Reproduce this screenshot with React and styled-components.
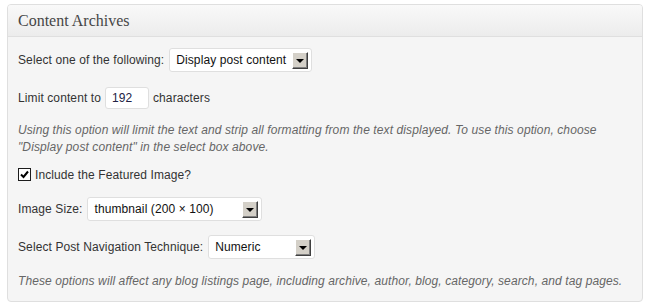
import React from "react";
import styled, { createGlobalStyle } from "styled-components";

const Global = createGlobalStyle`
  html, body {
    margin: 0;
    padding: 0;
    background: #ffffff;
  }
  body {
    font-family: "Liberation Sans", Arial, sans-serif;
    font-size: 12px;
    letter-spacing: 0.1px;
    color: #333333;
  }
`;

const Page = styled.div`
  padding: 4px 3px 5px 7px;
`;

const Panel = styled.div`
  width: 634px;
  border: 1px solid #dfdfdf;
  border-radius: 4px;
  background: #f5f5f5;
  overflow: hidden;
`;

const Header = styled.div`
  height: 31px;
  border-bottom: 1px solid #dfdfdf;
  background: linear-gradient(to bottom, #f9f9f9, #ececec);
  display: flex;
  align-items: center;
  padding-left: 10px;
`;

const Title = styled.h3`
  margin: 0;
  font-family: "Liberation Serif", "DejaVu Serif", serif;
  font-weight: normal;
  font-size: 16px;
  letter-spacing: 0;
  color: #464646;
`;

const Body = styled.div`
  padding: 11px 10px 11px 10px;
  display: flex;
  flex-direction: column;
`;

const Row = styled.div`
  display: flex;
  align-items: center;
  height: ${(p) => p.$h || 24}px;
  margin-top: ${(p) => p.$mt || 0}px;
  gap: ${(p) => p.$gap || 5}px;
  white-space: nowrap;
`;

const Note = styled.p`
  margin: ${(p) => p.$mt || 0}px 0 0;
  font-style: italic;
  color: #666666;
  line-height: 17px;
`;

const SelectBox = styled.div`
  width: ${(p) => p.$w}px;
  height: 24px;
  box-sizing: border-box;
  border: 1px solid #dfdfdf;
  border-radius: 3px;
  background: #ffffff;
  display: flex;
  align-items: center;
  justify-content: space-between;
  padding: 0 3px 0 6px;
  color: #111111;
`;

const DropButton = styled.span`
  width: 16px;
  height: 17px;
  box-sizing: border-box;
  background: #d4d0c8;
  border-top: 1px solid #ffffff;
  border-left: 1px solid #ffffff;
  border-right: 1px solid #404040;
  border-bottom: 1px solid #404040;
  box-shadow: inset -1px -1px 0 #808080;
  display: flex;
  align-items: center;
  justify-content: center;
`;

const Arrow = styled.span`
  width: 0;
  height: 0;
  border-left: 4px solid transparent;
  border-right: 4px solid transparent;
  border-top: 4px solid #000000;
  margin: 1px 1px 0 0;
`;

const TextInput = styled.div`
  width: 44px;
  height: 22px;
  box-sizing: border-box;
  border: 1px solid #dfdfdf;
  border-radius: 3px;
  background: #ffffff;
  display: flex;
  align-items: center;
  padding-left: 6px;
  color: #222244;
`;

const Check = styled.span`
  width: 13px;
  height: 13px;
  box-sizing: border-box;
  border: 1px solid #1c1c1c;
  background: #ffffff;
  display: flex;
  align-items: center;
  justify-content: center;
`;

const Select = ({ value, width }) => (
  <SelectBox $w={width}>
    <span>{value}</span>
    <DropButton>
      <Arrow />
    </DropButton>
  </SelectBox>
);

export default function App() {
  return (
    <Page>
      <Global />
      <Panel>
        <Header>
          <Title>Content Archives</Title>
        </Header>
        <Body>
          <Row>
            <span>Select one of the following:</span>
            <Select value="Display post content" width={143} />
          </Row>
          <Row $h={22} $mt={15} $gap={4}>
            <span>Limit content to</span>
            <TextInput>192</TextInput>
            <span>characters</span>
          </Row>
          <Note $mt={13}>
            Using this option will limit the text and strip all formatting from the text displayed. To use this option, choose
            "Display post content" in the select box above.
          </Note>
          <Row $h={17} $mt={10} $gap={4}>
            <Check>
              <svg width="9" height="9" viewBox="0 0 9 9">
                <path d="M1 4.5 L3.5 7 L8 1.5" fill="none" stroke="#000" strokeWidth="2" />
              </svg>
            </Check>
            <span>Include the Featured Image?</span>
          </Row>
          <Row $mt={14}>
            <span>Image Size:</span>
            <Select value="thumbnail (200 × 100)" width={175} />
          </Row>
          <Row $mt={14}>
            <span>Select Post Navigation Technique:</span>
            <Select value="Numeric" width={107} />
          </Row>
          <Note $mt={14}>
            These options will affect any blog listings page, including archive, author, blog, category, search, and tag pages.
          </Note>
        </Body>
      </Panel>
    </Page>
  );
}
